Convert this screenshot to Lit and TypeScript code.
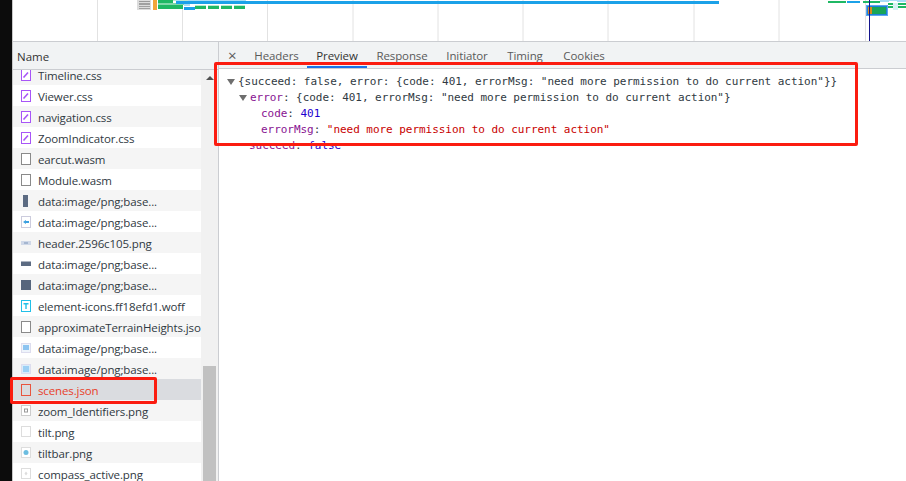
import { LitElement, html, css, svg } from "lit";
import { customElement } from "lit/decorators.js";

type Row = { name: string; icon: string };

const rows: Row[] = [
  { name: "Timeline.css", icon: "css" },
  { name: "Viewer.css", icon: "css" },
  { name: "navigation.css", icon: "css" },
  { name: "ZoomIndicator.css", icon: "css" },
  { name: "earcut.wasm", icon: "file" },
  { name: "Module.wasm", icon: "file" },
  { name: "data:image/png;base...", icon: "tall" },
  { name: "data:image/png;base...", icon: "arrow" },
  { name: "header.2596c105.png", icon: "header" },
  { name: "data:image/png;base...", icon: "wide" },
  { name: "data:image/png;base...", icon: "square" },
  { name: "element-icons.ff18efd1.woff", icon: "font" },
  { name: "approximateTerrainHeights.json", icon: "file" },
  { name: "data:image/png;base...", icon: "blue" },
  { name: "data:image/png;base...", icon: "blue2" },
  { name: "scenes.json", icon: "red" },
  { name: "zoom_Identifiers.png", icon: "zoom" },
  { name: "tilt.png", icon: "blank" },
  { name: "tiltbar.png", icon: "dot" },
  { name: "compass_active.png", icon: "compass" },
];

const grid = [97.5, 182.5, 267.5, 353, 438, 523, 608, 694, 779, 865.5];

const G = "#1fb864";
const B = "#1ba1e8";
const PG = "#bfe8d0";
const PB = "#a8dcf6";
const bars: [number, number, number, number, string][] = [
  [137, 0, 14, 10, "#dcdcdc"],
  [139, 1, 11, 1, "#9a9a9a"],
  [139, 3, 11, 2, "#a0a0a0"],
  [139, 6, 11, 1, "#a0a0a0"],
  [139, 8, 11, 1, "#a0a0a0"],
  [153, 0, 4, 10, "#f2a63a"],
  [158, 0, 15, 3, G],
  [173, 0, 3, 1, PG],
  [158, 3, 30, 2, "#7fd8a8"],
  [158, 5, 25, 4, G],
  [176, 0, 70, 1, PB],
  [180, 0, 8, 1, PG],
  [176, 1, 543, 3, B],
  [184, 4, 6, 2, PB],
  [184, 7, 11, 3, B],
  [195, 5, 11, 1, PG],
  [195, 6, 11, 3, G],
  [208, 5, 11, 1, PG],
  [208, 6, 11, 3, G],
  [221, 5, 11, 1, PG],
  [221, 6, 11, 3, G],
  [234, 5, 11, 1, PG],
  [234, 6, 11, 3, G],
  [828, 1, 18, 2, G],
  [847, 1, 13, 2, B],
  [863, 1, 17, 2, G],
  [880, 0, 26, 2, PB],
  [889, 1, 8, 1, "#fff"],
  [888, 3, 18, 2, G],
  [888, 6, 18, 2, G],
  [893, 3, 5, 7, "#d8f0f4"],
];

function icon(kind: string) {
  switch (kind) {
    case "css":
      return svg`<rect x="0.5" y="0.5" width="9" height="11" fill="#fff" stroke="#a855f7"/><path d="M2.5 8.5 7 3.5" stroke="#a855f7" stroke-width="1.6"/>`;
    case "file":
      return svg`<rect x="0.5" y="0.5" width="9" height="11" fill="#fff" stroke="#8a8a8a"/>`;
    case "red":
      return svg`<rect x="0.5" y="0.5" width="9" height="11" fill="none" stroke="#e8553f"/>`;
    case "tall":
      return svg`<rect x="2" y="0" width="5" height="12" fill="#5c6b82"/>`;
    case "arrow":
      return svg`<rect x="0.5" y="0.5" width="9" height="11" fill="#fff" stroke="#ccd"/><path d="M2 6 5 4v1h3v2H5v1Z" fill="#3ba0e0"/>`;
    case "header":
      return svg`<rect x="0" y="4" width="10" height="4" fill="#cfd8e8"/><rect x="3" y="5.5" width="4" height="1" fill="#7d93b8"/>`;
    case "wide":
      return svg`<rect x="0" y="3.5" width="10" height="4.5" fill="#5c6b82"/>`;
    case "square":
      return svg`<rect x="0" y="1" width="10" height="10" fill="#56657c"/>`;
    case "font":
      return svg`<rect x="0.5" y="0.5" width="9" height="11" fill="#fff" stroke="#22c0e8"/><path d="M2.5 3h5v1.4H5.7V9H4.3V4.400H2.500Z" fill="#22c0e8"/>`;
    case "blue":
      return svg`<rect x="0.5" y="1.5" width="9" height="9" fill="#eef4fb" stroke="#dde"/><rect x="2" y="3" width="6" height="5" fill="#8cc4f0"/>`;
    case "blue2":
      return svg`<rect x="0.5" y="1.5" width="9" height="9" fill="#d8ecfa" stroke="#dde"/><rect x="2" y="3" width="6" height="6" fill="#9cd0f4"/>`;
    case "zoom":
      return svg`<rect x="0.5" y="0.5" width="9" height="10" fill="#fff" stroke="#ccc"/><rect x="3.500" y="4" width="3" height="3" fill="none" stroke="#999"/>`;
    case "blank":
      return svg`<rect x="0.5" y="0.5" width="9" height="10" fill="#fff" stroke="#ddd"/>`;
    case "dot":
      return svg`<rect x="0.5" y="0.5" width="9" height="10" fill="#fff" stroke="#ddd"/><circle cx="5" cy="5.500" r="2.500" fill="#6cbde0"/>`;
    default:
      return svg`<rect x="0.5" y="0.5" width="9" height="10" fill="#fff" stroke="#ddd"/><path d="M5 3.500 6.500 5.500 5 7.500 3.500 5.500Z" fill="#ddd"/>`;
  }
}

@customElement("app-root")
export class AppRoot extends LitElement {
  static styles = css`
    :host {
      display: block;
      position: relative;
      width: 906px;
      height: 481px;
      overflow: hidden;
      background: #fff;
      font-family: "Open Sans", "Noto Sans", sans-serif;
    }
    .page {
      display: flex;
      height: 481px;
    }
    .strip {
      width: 13px;
      flex: none;
      background: #0c0c0c;
      border-right: 1px solid #c8c8c8;
      box-sizing: border-box;
    }
    .main {
      flex: 1;
      min-width: 0;
      display: flex;
      flex-direction: column;
    }
    .timeline {
      height: 42px;
      flex: none;
      box-sizing: border-box;
      border-bottom: 1px solid #cbcdd1;
      background: #fff;
      overflow: hidden;
    }
    .timeline svg {
      display: block;
      margin-left: -13px;
    }
    .bottom {
      flex: 1;
      min-height: 0;
      display: flex;
    }
    .names {
      width: 205px;
      flex: none;
      display: flex;
      flex-direction: column;
      border-right: 1px solid #cbcdd1;
      background: #f1f1f1;
      overflow: hidden;
    }
    .names-head {
      height: 28px;
      flex: none;
      box-sizing: border-box;
      border-bottom: 1px solid #cbcdd1;
      background: #f1f3f4;
      padding: 6px 0 0 4px;
      font-size: 11.5px;
      line-height: 18px;
      color: #333;
    }
    .names-body {
      flex: 1;
      min-height: 0;
      display: flex;
      overflow: hidden;
    }
    .list {
      width: 188px;
      flex: none;
      margin-top: -6px;
    }
    .row {
      height: 21px;
      display: flex;
      align-items: center;
      overflow: hidden;
      white-space: nowrap;
      font-size: 11.5px;
      letter-spacing: -0.12px;
      color: #303942;
      background: #fff;
      padding-left: 8px;
    }
    .row.alt {
      background: #f5f5f5;
    }
    .row.sel {
      background: #dadce0;
      color: #e8402a;
    }
    .row svg {
      flex: none;
      margin-right: 7px;
    }
    .label {
      padding-top: 2px;
    }
    .scroll {
      flex: 1;
      display: flex;
      flex-direction: column;
      align-items: center;
    }
    .scroll-up {
      margin-top: 6px;
      width: 0;
      height: 0;
      border-left: 4px solid transparent;
      border-right: 4px solid transparent;
      border-bottom: 4px solid #505050;
    }
    .thumb {
      margin-top: auto;
      width: 13px;
      height: 115px;
      background: #c1c1c1;
    }
    .detail {
      flex: 1;
      min-width: 0;
      display: flex;
      flex-direction: column;
    }
    .tabs {
      height: 27px;
      flex: none;
      box-sizing: border-box;
      background: #f1f3f4;
      border-bottom: 1px solid #cbcdd1;
      display: flex;
      align-items: flex-end;
      font-size: 11.5px;
      letter-spacing: -0.1px;
      color: #5a5a5a;
    }
    .close {
      width: 27px;
      flex: none;
      box-sizing: border-box;
      padding-left: 9px;
      align-self: flex-start;
      margin-top: 5px;
      line-height: 16px;
      font-size: 15px;
    }
    .tab {
      flex: none;
      height: 26px;
      box-sizing: border-box;
      padding-top: 6px;
      line-height: 16px;
      text-align: center;
    }
    .tab.on {
      border-bottom: 2px solid #1a73e8;
      color: #333;
    }
    .tree {
      padding: 5px 0 0 8px;
      font-family: "DejaVu Sans Mono", "Liberation Mono", monospace;
      font-size: 11px;
      letter-spacing: -0.04px;
      line-height: 16px;
      color: #303942;
    }
    .line {
      height: 16px;
      display: flex;
      align-items: center;
      white-space: pre;
    }
    .i1 { padding-left: 12px; }
    .i2 { padding-left: 34px; }
    .i3 { padding-left: 22px; }
    .tri {
      flex: none;
      width: 0;
      height: 0;
      margin-right: 3px;
      border-left: 4px solid transparent;
      border-right: 4px solid transparent;
      border-top: 6px solid #6e6e6e;
    }
    .k { color: #881391; }
    .s { color: #c80000; }
    .n { color: #1c00cf; }
    .mark {
      position: absolute;
      box-sizing: border-box;
      border: 3px solid #fb1c10;
      border-radius: 2px;
      pointer-events: none;
    }
    .mark.a {
      left: 214px;
      top: 62px;
      width: 644px;
      height: 84px;
    }
    .mark.b {
      left: 10px;
      top: 377px;
      width: 147px;
      height: 27px;
    }
  `;

  render() {
    const tabs: [string, number, boolean][] = [
      ["Headers", 61, false],
      ["Preview", 60, true],
      ["Response", 70, false],
      ["Initiator", 60, false],
      ["Timing", 56, false],
      ["Cookies", 62, false],
    ];
    const msg = `"need more permission to do current action"`;
    return html`
      <div class="page">
        <div class="strip"></div>
        <div class="main">
          <div class="timeline">
            <svg width="906" height="41" viewBox="0 0 906 41">
              ${grid.map((x) => svg`<line x1=${x} x2=${x} y1="0" y2="41" stroke="#e2e2e2" />`)}
              ${bars.map(([x, y, w, h, c]) => svg`<rect x=${x} y=${y} width=${w} height=${h} fill=${c} />`)}
              <rect x="866.500" y="5.500" width="21" height="10" fill="#1f7fd8" stroke="#5ca8ee" />
              <rect x="868" y="7" width="4" height="7" fill="#d88a1c" />
              <rect x="872" y="7" width="14" height="7" fill="#17a558" />
              <line x1="869.500" x2="869.500" y1="0" y2="41" stroke="#14148c" />
            </svg>
          </div>
          <div class="bottom">
            <div class="names">
              <div class="names-head">Name</div>
              <div class="names-body">
                <div class="list">
                  ${rows.map(
                    (r, i) => html`<div class="row ${r.icon === "red" ? "sel" : i % 2 === 0 ? "alt" : ""}">
                      <svg width="10" height="12" viewBox="0 0 10 12">${icon(r.icon)}</svg><span class="label">${r.name}</span>
                    </div>`
                  )}
                </div>
                <div class="scroll">
                  <div class="scroll-up"></div>
                  <div class="thumb"></div>
                </div>
              </div>
            </div>
            <div class="detail">
              <div class="tabs">
                <div class="close">×</div>
                ${tabs.map(
                  ([t, w, on]) => html`<div class="tab ${on ? "on" : ""}" style="width:${w}px">${t}</div>`
                )}
              </div>
              <div class="tree">
                <div class="line"><span class="tri"></span><span>{succeed: false, error: {code: 401, errorMsg: ${msg}}}</span></div>
                <div class="line i1"><span class="tri"></span><span><span class="k">error</span>: {code: 401, errorMsg: ${msg}}</span></div>
                <div class="line i2"><span><span class="k">code</span>: <span class="n">401</span></span></div>
                <div class="line i2"><span><span class="k">errorMsg</span>: <span class="s">${msg}</span></span></div>
                <div class="line i3"><span><span class="k">succeed</span>: <span class="n">false</span></span></div>
              </div>
            </div>
          </div>
        </div>
      </div>
      <div class="mark a"></div>
      <div class="mark b"></div>
    `;
  }
}
